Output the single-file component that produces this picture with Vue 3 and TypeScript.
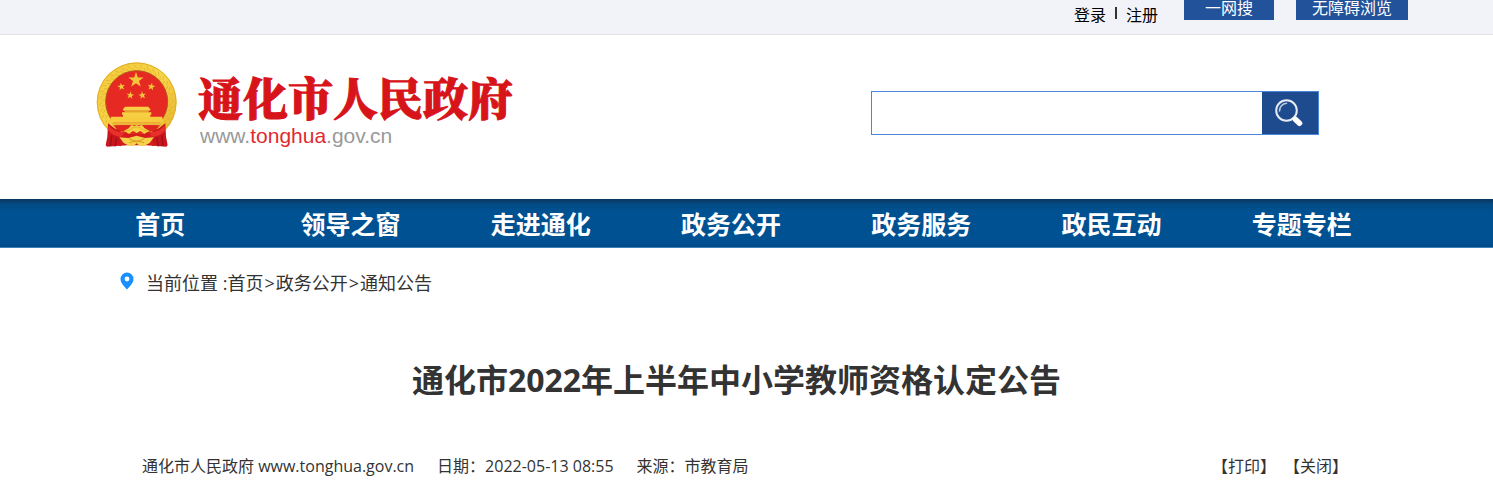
<script setup lang="ts">
import { ref } from 'vue'

const keyword = ref('')
const navItems: string[] = ['首页', '领导之窗', '走进通化', '政务公开', '政务服务', '政民互动', '专题专栏']
const crumbs: string[] = ['首页', '政务公开', '通知公告']

const closePage = () => window.close()
const printPage = () => window.print()

function star(cx: number, cy: number, r: number, turn = 0): string {
  return Array.from({ length: 10 }, (_, i) => {
    const a = ((-90 + turn + i * 36) * Math.PI) / 180
    const d = i % 2 ? r * 0.4 : r
    return `${(cx + d * Math.cos(a)).toFixed(1)},${(cy + d * Math.sin(a)).toFixed(1)}`
  }).join(' ')
}
const stars: string[] = [
  star(120, 54, 24),
  star(76, 74, 12, -10),
  star(166, 74, 12, 10),
  star(103, 100, 12, 8),
  star(139, 100, 12, -8),
]
const grains: number[] = Array.from({ length: 30 }, (_, i) => 126 + i * 10)
</script>

<template>
  <div class="page">
    <div class="topbar">
      <div class="account">
        <a href="#">登录</a>
        <span class="divider"></span>
        <a href="#">注册</a>
      </div>
      <a class="tool search-tool" href="#">一网搜</a>
      <a class="tool access-tool" href="#">无障碍浏览</a>
    </div>

    <header class="header">
      <a class="brand" href="#">
        <svg class="emblem" viewBox="0 0 246 258" aria-hidden="true">
          <defs>
            <linearGradient id="gold" x1="0" y1="0" x2="1" y2="1">
              <stop offset="0" stop-color="#f3c93a" />
              <stop offset="0.5" stop-color="#f7d548" />
              <stop offset="1" stop-color="#e4b029" />
            </linearGradient>
          </defs>
          <circle cx="122" cy="121" r="120" fill="url(#gold)" />
          <circle cx="122" cy="121" r="118" fill="none" stroke="#e0ae2e" stroke-width="3" />
          <g stroke="#dfac2c" stroke-width="2" stroke-linecap="round">
            <path
              v-for="angle in grains"
              :key="angle"
              d="M219 121l7 -6M226 127l8 -6"
              :transform="`rotate(${angle} 122 121)`"
            />
          </g>
          <circle cx="122" cy="119" r="93" fill="#e62a23" stroke="#b5571b" stroke-width="3" />
          <polygon v-for="points in stars" :key="points" :points="points" fill="#f3c63c" />
          <path d="M87 134h70l7 9-4 3H84l-4-3z" fill="#f7d045" />
          <path d="M86 146h72v6H86z" fill="#e0a52b" />
          <path d="M78 151h88v7h-3v11H81v-11h-3z" fill="#f6cf42" />
          <path d="M46 164h152l6 18H38z" fill="#f6cb3d" />
          <path d="M46 182h152l-6 8H52z" fill="#e9b637" />
          <path d="M52 190h140l-14 16-56 10-56-10z" fill="#e1251f" />
          <path d="M36 184l18 14 24 12 18-3-7 43-56 4-4-4 5-26z" fill="#c9151b" />
          <path d="M208 184l-18 14-24 12-18-3 7 43 56 4 4-4-5-26z" fill="#c9151b" />
          <path d="M38 190c12 16 30 22 50 20l-4 14c-18 2-36-4-48-20z" fill="#e8302a" />
          <path d="M206 190c-12 16-30 22-50 20l4 14c18 2 36-4 48-20z" fill="#e8302a" />
          <path d="M47 220l-4 32M62 226l-5 27M77 228l-5 24M197 220l4 32M182 226l5 27M167 228l5 24" stroke="#9f1019" stroke-width="4" fill="none" />
          <path d="M82 214h80l14 36H68z" fill="#d51b1d" />
          <path d="M83 207l15-8 8-10 10 3 6-4 6 4 10-3 8 10 15 8-16 8-12-8-11 6-11-6-12 8z" fill="#f6cf42" />
          <path d="M84 208l16-3 9-7 13-4 13 4 9 7 16 3" fill="none" stroke="#dda12a" stroke-width="2" />
          <path d="M70 226l27 2 25-7 25 7 27-2-13 17-18 9h-12l-9-8-9 8h-12l-18-9z" fill="#f5d04a" />
          <path d="M99 230l23 10 23-10M100 242l22-6 22 6" fill="none" stroke="#d99b20" stroke-width="3" />
        </svg>
        <span class="wordmark">
          <strong class="site-name">通化市人民政府</strong>
          <span class="site-url">www.<em>tonghua</em>.gov.cn</span>
        </span>
      </a>
      <form class="search" role="search" @submit.prevent>
        <input v-model="keyword" type="text" aria-label="搜索" />
        <button type="submit" aria-label="搜索">
          <svg viewBox="0 0 30 28" aria-hidden="true">
            <circle cx="12.5" cy="11.5" r="10.3" fill="none" stroke="#e6ebf4" stroke-width="2" />
            <path d="M5.5 12a7.5 7.5 0 0 1 7-7.8" fill="none" stroke="#b9c7df" stroke-width="1.6" stroke-linecap="round" />
            <path d="M19 18.5l2 2" stroke="#fff" stroke-width="3" />
            <path d="M21.5 20.5l4 3.7" stroke="#fff" stroke-width="5.6" stroke-linecap="round" />
          </svg>
        </button>
      </form>
    </header>

    <nav class="nav">
      <a v-for="item in navItems" :key="item" href="#">{{ item }}</a>
    </nav>

    <main>
      <div class="crumbs">
        <svg class="pin" viewBox="0 0 14 18" aria-hidden="true">
          <path d="M7 0.5a6.5 6.5 0 0 0-6.5 6.6C.5 11 4.500 15 7 17.500 9.500 15 13.500 11 13.500 7.100A6.500 6.500 0 0 0 7 .5z" fill="#1890ff" />
          <circle cx="7" cy="7" r="2.400" fill="#fff" />
        </svg>
        <span>当前位置 :</span><template v-for="(crumb, i) in crumbs" :key="crumb"><span v-if="i" class="arrow">&gt;</span><a href="#">{{ crumb }}</a></template>
      </div>

      <h1>通化市2022年上半年中小学教师资格认定公告</h1>

      <div class="meta">
        <span>通化市人民政府 www.tonghua.gov.cn</span>
        <span>日期：<time datetime="2022-05-13T08:55">2022-05-13 08:55</time></span>
        <span>来源：市教育局</span>
        <div class="actions">
          <button type="button" @click="printPage">【打印】</button>
          <button type="button" @click="closePage">【关闭】</button>
        </div>
      </div>
    </main>
  </div>
</template>

<style>
body {
  margin: 0;
  background: #fff;
}
</style>

<style scoped>
.page {
  font-family: "Open Sans", "Noto Sans CJK SC", sans-serif;
  font-size: 16px;
  line-height: 24px;
  color: #333;
  overflow: hidden;
}

a {
  color: inherit;
  text-decoration: none;
}

.topbar {
  display: flex;
  justify-content: flex-end;
  align-items: flex-start;
  height: 34px;
  padding-right: 85px;
  background: #f2f3f8;
  border-bottom: 1px solid #e2e2e4;
}

.account {
  display: flex;
  align-items: center;
  gap: 9px;
  padding-top: 3px;
  margin-right: 26px;
  color: #000;
}

.divider {
  width: 2px;
  height: 12px;
  margin-bottom: 4px;
  background: #333;
}

.tool {
  height: 20px;
  line-height: 16px;
  text-align: center;
  color: #fff;
  background: #225299;
}

.search-tool {
  width: 90px;
  margin-right: 22px;
}

.access-tool {
  width: 112px;
}

.header {
  display: flex;
  justify-content: space-between;
  align-items: flex-start;
  height: 164px;
  padding: 0 174px 0 96px;
}

.brand {
  display: flex;
  gap: 20px;
  padding-top: 27px;
}

.emblem {
  width: 82px;
  height: 86px;
}

.wordmark {
  display: flex;
  flex-direction: column;
  gap: 4px;
  padding-top: 12px;
}

.site-name {
  font-family: "Noto Serif CJK SC", "Noto Sans CJK SC", serif;
  font-size: 45px;
  font-weight: 900;
  line-height: 46px;
  color: #d7141a;
  -webkit-text-stroke: 1px #d7141a;
}

.site-url {
  padding-left: 2px;
  font-family: "Liberation Sans", Arial, sans-serif;
  font-size: 21px;
  line-height: 24px;
  color: #999;
}

.site-url em {
  font-style: normal;
  color: #df2b30;
}

.search {
  display: flex;
  width: 446px;
  height: 42px;
  margin-top: 56px;
  border: 1px solid #4a86d5;
}

.search input {
  flex: 1;
  min-width: 0;
  padding: 0 10px;
  border: 0;
  outline: 0;
  font: inherit;
  background: #fff;
}

.search button {
  display: flex;
  justify-content: center;
  align-items: center;
  width: 56px;
  padding: 0 2px 0 0;
  border: 0;
  background: #1e4a8e;
}

.search svg {
  width: 30px;
  height: 28px;
}

.nav {
  display: grid;
  grid-template-columns: repeat(7, 1fr);
  height: 48px;
  padding: 0 96px 0 65px;
  border-bottom: 1px solid #3f7fb5;
  background: linear-gradient(#0b355c, #034a82 5px, #005192 12px, #005192 42px, #004b8a);
}

.nav a {
  font-size: 25px;
  font-weight: 700;
  line-height: 50px;
  text-align: center;
  color: #fff;
}

.crumbs {
  display: flex;
  align-items: center;
  padding: 21px 120px 0;
  font-size: 18px;
  line-height: 28px;
  white-space: pre;
}

.arrow {
  padding: 0 1px;
}

.pin {
  width: 14px;
  height: 18px;
  margin: 0 12px 4px 0;
}

h1 {
  margin: 59px 20px 0 0;
  font-size: 32px;
  font-weight: 700;
  line-height: 48px;
  text-align: center;
}

.meta {
  display: flex;
  gap: 23px;
  padding: 50px 145px 16px 142px;
}

.actions {
  display: flex;
  gap: 8px;
  margin-left: auto;
}

.actions button {
  padding: 0;
  border: 0;
  font: inherit;
  color: inherit;
  background: none;
}
</style>
